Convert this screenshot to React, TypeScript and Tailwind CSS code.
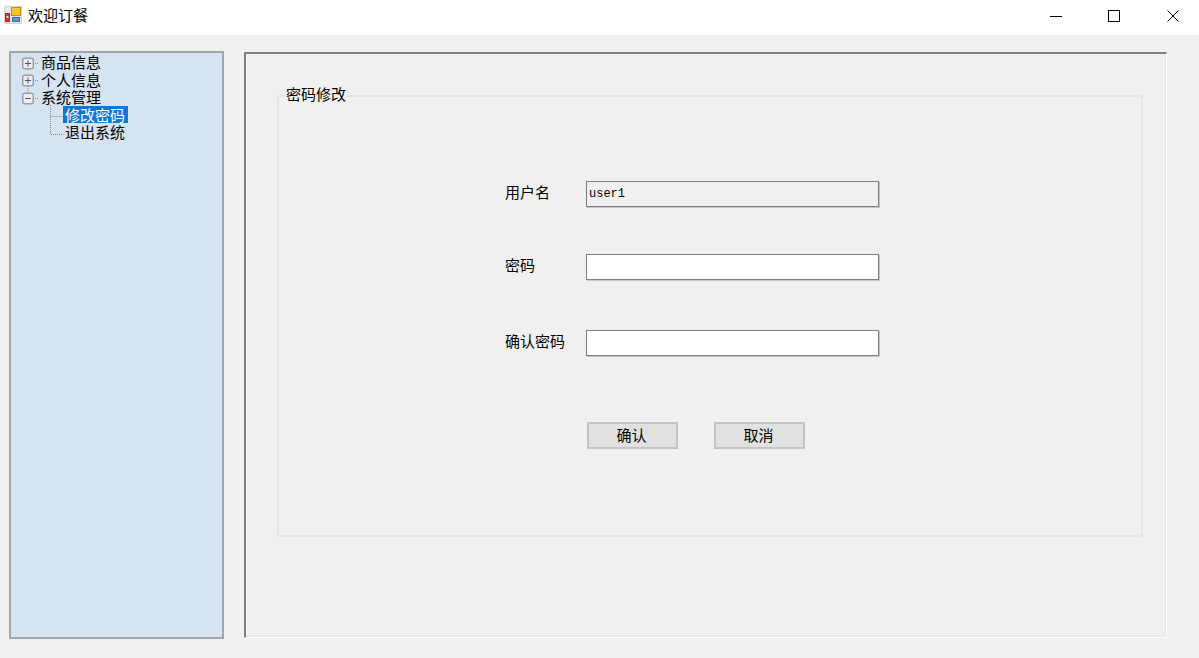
const cjk = "font-['Noto_Sans_CJK_SC','Liberation_Sans',sans-serif]";

function AppIcon() {
  return (
    <svg width="18" height="18" viewBox="0 0 18 18">
      <rect x="0" y="0" width="18" height="18" fill="#d4d4d4" />
      <rect x="1" y="1" width="16" height="16" fill="#e8e8e8" />
      <rect x="7.5" y="1.5" width="9" height="8" fill="#f7c92e" stroke="#c08f10" />
      <rect x="1.5" y="7.5" width="4" height="8" fill="#d8382c" stroke="#8a3028" />
      <rect x="2.5" y="10" width="2" height="2" fill="#f4e0c0" />
      <rect x="8.5" y="11.5" width="7" height="4" fill="#5b9bd5" stroke="#3a6ea5" />
    </svg>
  );
}

function Expander({ open, last }: { open?: boolean; last?: boolean }) {
  return (
    <svg width="21" height="18" viewBox="0 0 21 18" className="shrink-0">
      {!last && <path d="M8 16v2" stroke="#8a8a8a" strokeDasharray="1 1" />}
      <path d="M8 0v5" stroke="#8a8a8a" strokeDasharray="1 1" className={open || last ? '' : 'hidden'} />
      <rect x="2.75" y="5.25" width="10.5" height="10.5" rx="2" fill="#eceef1" stroke="#a0a0a0" strokeWidth="1.5" />
      <path d="M5 10.5h6" stroke="#3f5a96" strokeWidth="1" />
      {!open && <path d="M8 7.5v6" stroke="#3f5a96" strokeWidth="1" />}
      <path d="M15 10.5h4" stroke="#8a8a8a" strokeDasharray="1 1" />
    </svg>
  );
}

function TreeLine({ last }: { last?: boolean }) {
  return (
    <svg width="14" height="18" viewBox="0 0 14 18" className="shrink-0">
      <path d={last ? 'M0.5 0v11.5h13' : 'M0.5 0v18M0.5 11.5h13'} fill="none" stroke="#8a8a8a" strokeDasharray="1 1" />
    </svg>
  );
}

function TreePanel() {
  return (
    <div className="w-[215px] h-[588px] shrink-0 border-2 border-[#a2a6b0] bg-[#d6e4f2] pl-[9px] text-[15px] leading-[17.5px] text-black">
      {['商品信息', '个人信息', '系统管理'].map((name, idx) => (
        <div key={name} className="flex items-center h-[17.5px]">
          <Expander open={idx === 2} last={idx === 2} />
          <span className="whitespace-nowrap">{name}</span>
        </div>
      ))}
      <div className="flex items-center h-[17.5px] pl-[30px]">
        <TreeLine />
        <span className="-ml-[1px] bg-[#0e78d5] text-white pl-[2px] pr-[3px] whitespace-nowrap">修改密码</span>
      </div>
      <div className="flex items-center h-[17.5px] pl-[30px]">
        <TreeLine last />
        <span className="ml-[1px] whitespace-nowrap">退出系统</span>
      </div>
    </div>
  );
}

function FormRow({
  label,
  value,
  disabled,
  className,
}: {
  label: string;
  value?: string;
  disabled?: boolean;
  className?: string;
}) {
  return (
    <div className={`flex items-center h-[26px] ${className ?? ''}`}>
      <span className="w-[81px] -mt-[4px] text-[15px] whitespace-nowrap">{label}</span>
      <div
        className={`w-[293px] h-[26px] border border-[#7f7f7f] shadow-[1px_1px_0_#c4c4c4] pl-[2px] flex items-center font-['Liberation_Mono',monospace] text-[12px] text-black ${
          disabled ? 'bg-[#f0f0f0]' : 'bg-white'
        }`}
      >
        {value}
      </div>
    </div>
  );
}

function ActionButton({ label }: { label: string }) {
  return (
    <button className="w-[91px] h-[27px] pb-[2px] pr-[2px] border-2 border-[#c4c4c4] bg-[#e1e1e1] text-[15px] leading-none text-black">
      {label}
    </button>
  );
}

export default function App() {
  return (
    <div className={`w-[1199px] h-[658px] overflow-hidden bg-[#f0f0f0] text-black ${cjk}`}>
      {/* title bar */}
      <div className="relative h-[35px] bg-white flex items-start">
        <div className="ml-[4px] mt-[6px] shrink-0">
          <AppIcon />
        </div>
        <span className="ml-[6px] mt-[4px] w-[60px] shrink-0 whitespace-nowrap text-[15px]">欢迎订餐</span>
        <div className="ml-[939px] flex shrink-0 pt-[10px]">
          <div className="w-[58px] h-[12px] flex items-center justify-center">
            <div className="w-[12px] h-px bg-black" />
          </div>
          <div className="w-[58px] h-[12px] flex items-center justify-center">
            <div className="w-[12px] h-[12px] border border-black" />
          </div>
          <div className="w-[60px] h-[12px] flex items-center justify-center">
            <svg width="12" height="12" viewBox="0 0 12 12">
              <path d="M0.5 0.5l11 11M11.5 0.5l-11 11" stroke="#000" strokeWidth="1" fill="none" />
            </svg>
          </div>
        </div>
      </div>

      {/* body */}
      <div className="flex pl-[9px] pt-[16px] gap-[20px]">
        <TreePanel />
        <div className="w-[923px] h-[586px] mt-[1px] border-t-2 border-l-2 border-r-1 border-b-1 border-t-[#808080] border-l-[#808080] border-r-white border-b-white shadow-[inset_-1px_-1px_0_#e4e4e4] pl-[31px] pt-[41px]">
          <div className="relative w-[866px] h-[442px] border-2 border-[#e6e6e6]">
            <span className="absolute left-[6px] -top-[13px] bg-[#f0f0f0] px-px text-[15px] leading-[20px]">
              密码修改
            </span>
            <div className="pl-[226px] pt-[84px]">
              <FormRow label="用户名" value="user1" disabled />
              <FormRow label="密码" className="mt-[47px]" />
              <FormRow label="确认密码" className="mt-[50px]" />
              <div className="flex gap-[36px] ml-[82px] mt-[66px]">
                <ActionButton label="确认" />
                <ActionButton label="取消" />
              </div>
            </div>
          </div>
        </div>
      </div>
    </div>
  );
}
